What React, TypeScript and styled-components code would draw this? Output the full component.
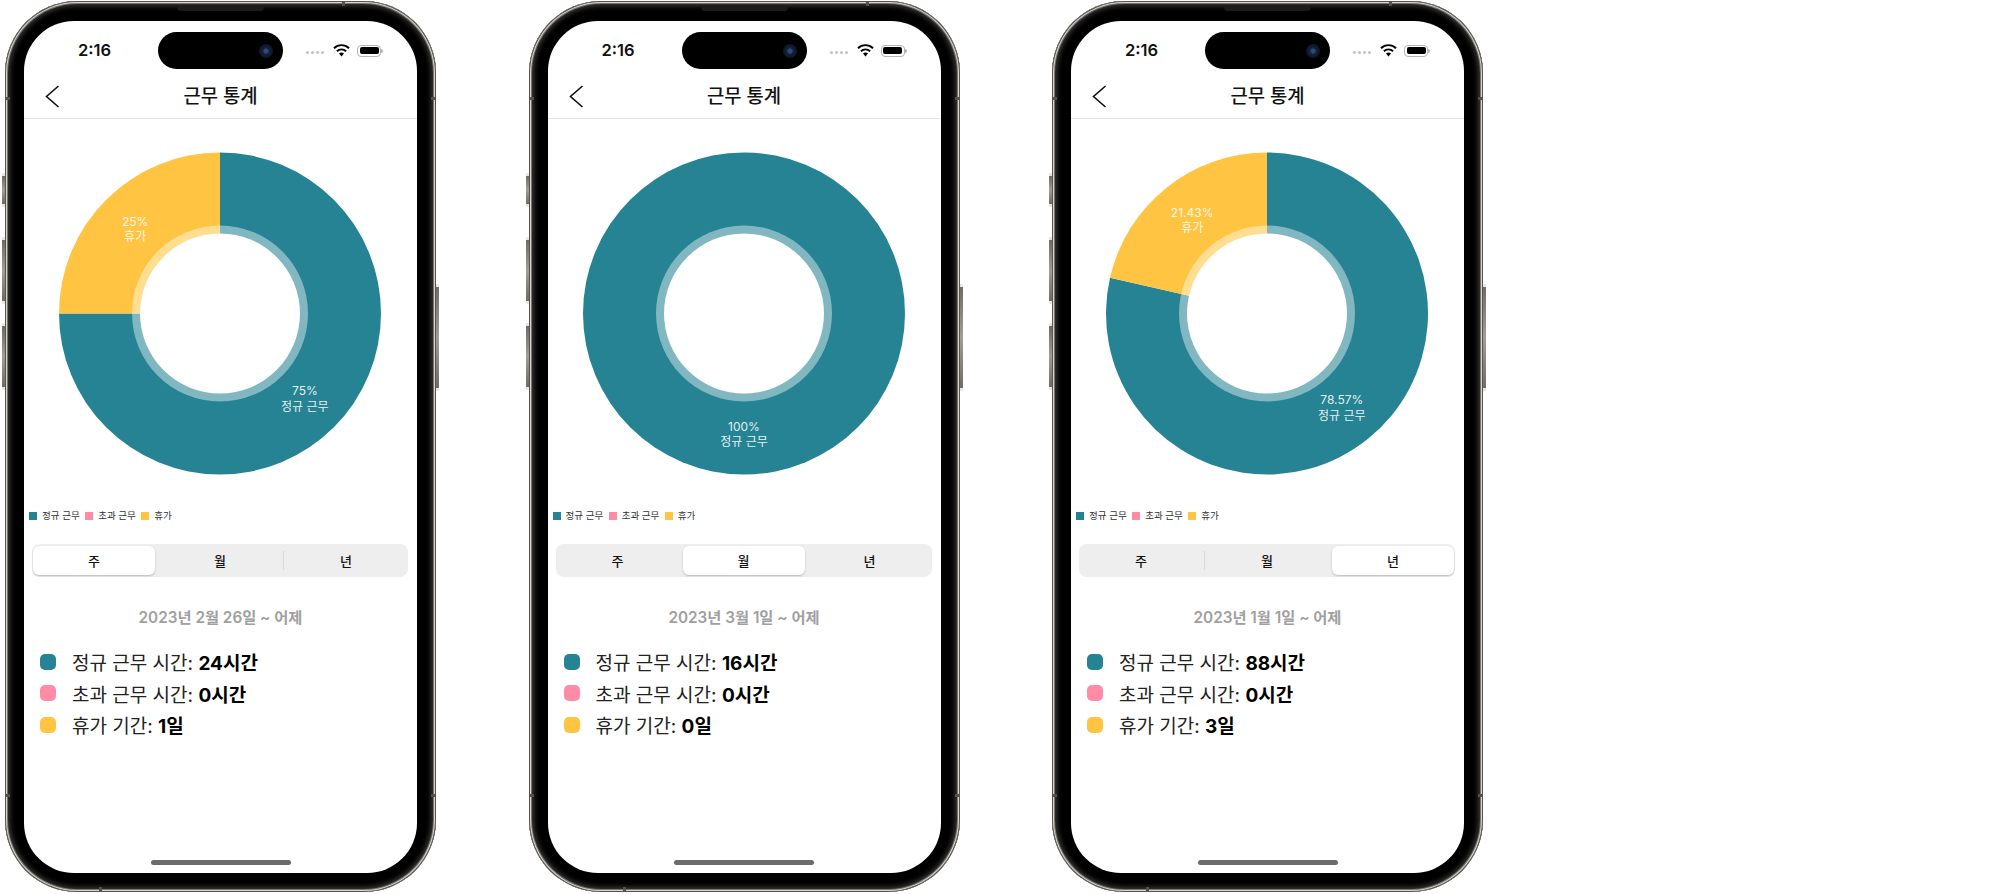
import { FC } from 'react'
import styled, { createGlobalStyle } from 'styled-components'

const TEAL = '#268394'
const PINK = '#ff8ba7'
const YELLOW = '#ffc542'

const GlobalStyle = createGlobalStyle`
  html, body {
    margin: 0;
    padding: 0;
    background: #fff;
  }
  body {
    font-family: Inter, "Noto Sans CJK KR", sans-serif;
    color: #000;
  }
`

const Page = styled.div`
  display: flex;
  gap: 92.5px;
  width: 2012px;
  height: 894px;
  box-sizing: border-box;
  padding: 1px 0 0 5px;
  overflow: hidden;
`

const Phone = styled.div`
  position: relative;
  flex: none;
  width: 431px;
  height: 891px;
  box-sizing: border-box;
  padding: 20px 19px 19px;
  border-radius: 72px;
  background: #000;
  box-shadow:
    inset 0 0 0 1px #57544f,
    inset 0 0 0 2px #d8d5cf,
    inset 0 0 0 3px #77746f,
    inset 0 0 5px 5px #3b3a39;
`

const SideButton = styled.span<{ $side: 'left' | 'right'; $top: number; $height: number }>`
  position: absolute;
  top: ${(p) => p.$top}px;
  ${(p) => p.$side}: -3px;
  width: 3px;
  height: ${(p) => p.$height}px;
  background: linear-gradient(#e8e6e0 0 3px, #6f6c67 3px, #a09d96 50%, #6f6c67 calc(100% - 3px), #e8e6e0 calc(100% - 3px));
  border-radius: 1px;
`

const AntennaBand = styled.span<{ $x: string; $y: string; $wide?: boolean }>`
  position: absolute;
  left: ${(p) => p.$x};
  top: ${(p) => p.$y};
  width: ${(p) => (p.$wide ? '3px' : '5px')};
  height: ${(p) => (p.$wide ? '5px' : '3px')};
  background: #55524e;
`

const Earpiece = styled.span`
  position: absolute;
  top: 6px;
  left: 172px;
  width: 87px;
  height: 4px;
  border-radius: 0 0 6px 6px;
  background: #1c1c1c;
`

const Screen = styled.div`
  width: 393px;
  height: 852px;
  display: flex;
  flex-direction: column;
  border-radius: 50px;
  background: #fff;
  overflow: hidden;
`

const StatusBar = styled.div`
  flex: none;
  height: 52px;
  display: flex;
  align-items: flex-start;
  padding-top: 11px;
  box-sizing: border-box;
`

const Time = styled.div`
  width: 134px;
  box-sizing: border-box;
  height: 37px;
  line-height: 37px;
  text-align: right;
  padding-right: 47px;
  font-size: 16.5px;
  font-weight: 600;
  color: #111;
`

const Island = styled.div`
  flex: none;
  width: 125px;
  height: 37px;
  border-radius: 19px;
  background: #000;
  display: flex;
  align-items: center;
  justify-content: flex-end;
  padding-right: 10px;
  box-sizing: border-box;
`

const Camera = styled.span`
  width: 14px;
  height: 14px;
  border-radius: 50%;
  background: radial-gradient(circle, #2b4a80 0 2px, #14233f 3px, #0f1420 7px);
`

const StatusIcons = styled.div`
  display: flex;
  align-items: center;
  height: 37px;
  margin-left: 23px;
`

const SignalDots = styled.div`
  display: flex;
  gap: 2px;
  margin-right: 9px;
  margin-top: 4px;
`

const SignalDot = styled.span`
  width: 3px;
  height: 3px;
  border-radius: 50%;
  background: #c4c4c4;
`

const Battery = styled.div`
  position: relative;
  width: 24px;
  height: 12px;
  box-sizing: border-box;
  margin-left: 7px;
  padding: 1.5px;
  border: 1px solid #b5b5b5;
  border-radius: 4px;
  &::after {
    content: '';
    position: absolute;
    right: -3px;
    top: 3px;
    width: 2px;
    height: 4px;
    border-radius: 0 2px 2px 0;
    background: #b5b5b5;
  }
`

const BatteryFill = styled.div`
  height: 100%;
  border-radius: 2px;
  background: #000;
`

const NavBar = styled.div`
  flex: none;
  height: 46px;
  box-sizing: border-box;
  border-bottom: 1px solid #e4e4e4;
  display: grid;
  grid-template-columns: 60px 1fr 60px;
  align-items: center;
`

const BackButton = styled.button`
  border: 0;
  padding: 0 0 0 21px;
  background: none;
  display: flex;
  align-items: center;
  height: 46px;
`

const Title = styled.div`
  text-align: center;
  font-size: 18.8px;
  font-weight: 500;
  color: #111;
  margin-top: -3px;
`

const ChartBox = styled.div`
  flex: none;
  height: 389px;
  line-height: 0;
`

const SliceLabel = styled.text`
  font-family: Inter, "Noto Sans CJK KR", sans-serif;
  font-size: 12px;
  fill: #fff;
  fill-opacity: 0.9;
  text-anchor: middle;
`

const Legend = styled.div`
  flex: none;
  display: flex;
  align-items: center;
  gap: 5.5px;
  height: 16px;
  padding-left: 5px;
`

const LegendItem = styled.div`
  display: flex;
  align-items: center;
  gap: 5px;
  font-size: 9.5px;
  line-height: 16px;
  color: #333;
`

const LegendSwatch = styled.span<{ $color: string }>`
  width: 8px;
  height: 8px;
  background: ${(p) => p.$color};
`

const Segment = styled.div`
  flex: none;
  height: 33px;
  margin: 20px 9px 0 8px;
  padding: 2px 1px;
  box-sizing: border-box;
  border-radius: 8px;
  background: #eeeeee;
  display: grid;
  grid-template-columns: repeat(3, 1fr);
  column-gap: 4px;
`

const SegmentTab = styled.div<{ $active: boolean; $divider: boolean }>`
  position: relative;
  display: flex;
  align-items: center;
  justify-content: center;
  font-size: 13px;
  font-weight: 500;
  color: #111;
  border-radius: 6px;
  background: ${(p) => (p.$active ? '#fff' : 'transparent')};
  box-shadow: ${(p) => (p.$active ? '0 1px 2px rgba(0, 0, 0, 0.22)' : 'none')};
  &::after {
    content: '';
    display: ${(p) => (p.$divider ? 'block' : 'none')};
    position: absolute;
    right: -2.5px;
    top: 5px;
    bottom: 5px;
    width: 1px;
    background: #d8d8d8;
  }
`

const DateRange = styled.div`
  flex: none;
  margin-top: 31px;
  text-align: center;
  font-size: 15.3px;
  line-height: 20px;
  font-weight: 600;
  color: #a0a0a0;
`

const StatList = styled.div`
  margin-top: 21px;
  padding-left: 16px;
  display: flex;
  flex-direction: column;
  gap: 6.5px;
`

const StatRow = styled.div`
  display: flex;
  align-items: center;
  gap: 16px;
  height: 25px;
  font-size: 19px;
  color: #222;
`

const StatDot = styled.span<{ $color: string }>`
  width: 16px;
  height: 16px;
  border-radius: 5px;
  background: ${(p) => p.$color};
`

const StatValue = styled.b`
  font-weight: 700;
  color: #000;
`

const HomeBar = styled.div`
  flex: none;
  width: 140px;
  height: 5px;
  margin: auto auto 8px;
  border-radius: 3px;
  background: #6b6b6b;
`

type PhoneData = {
  regular: number
  regularLabel: string
  vacationLabel?: string
  activeTab: number
  range: string
  hours: string
  overtime: string
  vacation: string
}

const phones: PhoneData[] = [
  { regular: 0.75, regularLabel: '75%', vacationLabel: '25%', activeTab: 0, range: '2023년 2월 26일 ~ 어제', hours: '24시간', overtime: '0시간', vacation: '1일' },
  { regular: 1, regularLabel: '100%', activeTab: 1, range: '2023년 3월 1일 ~ 어제', hours: '16시간', overtime: '0시간', vacation: '0일' },
  { regular: 0.7857, regularLabel: '78.57%', vacationLabel: '21.43%', activeTab: 2, range: '2023년 1월 1일 ~ 어제', hours: '88시간', overtime: '0시간', vacation: '3일' },
]

const CX = 196
const CY = 194.5
const OUTER = 161
const LABEL_R = 120

const polar = (fraction: number, r: number) => {
  const a = fraction * Math.PI * 2
  return [CX + r * Math.sin(a), CY - r * Math.cos(a)]
}

const wedge = (from: number, to: number) => {
  const [x1, y1] = polar(from, OUTER)
  const [x2, y2] = polar(to, OUTER)
  const large = to - from > 0.5 ? 1 : 0
  return `M${CX} ${CY}L${x1} ${y1}A${OUTER} ${OUTER} 0 ${large} 1 ${x2} ${y2}Z`
}

const SliceText: FC<{ at: number; percent: string; name: string }> = ({ at, percent, name }) => {
  const [x, y] = polar(at, LABEL_R)
  return (
    <SliceLabel x={x} y={y}>
      <tspan x={x} dy="-3">
        {percent}
      </tspan>
      <tspan x={x} dy="15.5">
        {name}
      </tspan>
    </SliceLabel>
  )
}

const Donut: FC<{ data: PhoneData }> = ({ data }) => (
  <svg width="393" height="389" viewBox="0 0 393 389">
    {data.regular >= 1 ? (
      <circle cx={CX} cy={CY} r={OUTER} fill={TEAL} />
    ) : (
      <>
        <path d={wedge(0, data.regular)} fill={TEAL} />
        <path d={wedge(data.regular, 1)} fill={YELLOW} />
      </>
    )}
    <circle cx={CX} cy={CY} r={88} fill="#fff" fillOpacity={0.42} />
    <circle cx={CX} cy={CY} r={80} fill="#fff" />
    <SliceText at={data.regular / 2} percent={data.regularLabel} name="정규 근무" />
    {data.vacationLabel && <SliceText at={(data.regular + 1) / 2} percent={data.vacationLabel} name="휴가" />}
  </svg>
)

const PhoneScreen: FC<{ data: PhoneData }> = ({ data }) => (
  <Phone>
    <SideButton $side="left" $top={172} $height={34} />
    <SideButton $side="left" $top={236} $height={67} />
    <SideButton $side="left" $top={322} $height={67} />
    <SideButton $side="right" $top={283} $height={107} />
    <AntennaBand $x="337px" $y="0px" $wide />
    <AntennaBand $x="94px" $y="886px" $wide />
    <AntennaBand $x="0px" $y="96px" />
    <AntennaBand $x="426px" $y="96px" />
    <AntennaBand $x="0px" $y="793px" />
    <AntennaBand $x="426px" $y="793px" />
    <Earpiece />
    <Screen>
      <StatusBar>
        <Time>2:16</Time>
        <Island>
          <Camera />
        </Island>
        <StatusIcons>
          <SignalDots>
            <SignalDot />
            <SignalDot />
            <SignalDot />
            <SignalDot />
          </SignalDots>
          <svg width="17" height="13" viewBox="0 0 17 13">
            <path d="M8.5 12.6 6 9.6a3.6 3.6 0 0 1 5 0Z" fill="#000" />
            <path d="M3.9 7.2a6.6 6.6 0 0 1 9.2 0" fill="none" stroke="#000" strokeWidth="1.9" />
            <path d="M1 4.2a10.8 10.8 0 0 1 15 0" fill="none" stroke="#000" strokeWidth="1.9" />
          </svg>
          <Battery>
            <BatteryFill />
          </Battery>
        </StatusIcons>
      </StatusBar>
      <NavBar>
        <BackButton>
          <svg width="15" height="23" viewBox="0 0 15 23">
            <path d="M13.5 1 1.5 11.5l12 10.5" fill="none" stroke="#111" strokeWidth="1.6" />
          </svg>
        </BackButton>
        <Title>근무 통계</Title>
      </NavBar>
      <ChartBox>
        <Donut data={data} />
      </ChartBox>
      <Legend>
        <LegendItem>
          <LegendSwatch $color={TEAL} />
          정규 근무
        </LegendItem>
        <LegendItem>
          <LegendSwatch $color={PINK} />
          초과 근무
        </LegendItem>
        <LegendItem>
          <LegendSwatch $color={YELLOW} />
          휴가
        </LegendItem>
      </Legend>
      <Segment>
        {['주', '월', '년'].map((tab, i) => (
          <SegmentTab key={tab} $active={i === data.activeTab} $divider={i < 2 && i !== data.activeTab && i + 1 !== data.activeTab}>
            {tab}
          </SegmentTab>
        ))}
      </Segment>
      <DateRange>{data.range}</DateRange>
      <StatList>
        <StatRow>
          <StatDot $color={TEAL} />
          <span>
            정규 근무 시간: <StatValue>{data.hours}</StatValue>
          </span>
        </StatRow>
        <StatRow>
          <StatDot $color={PINK} />
          <span>
            초과 근무 시간: <StatValue>{data.overtime}</StatValue>
          </span>
        </StatRow>
        <StatRow>
          <StatDot $color={YELLOW} />
          <span>
            휴가 기간: <StatValue>{data.vacation}</StatValue>
          </span>
        </StatRow>
      </StatList>
      <HomeBar />
    </Screen>
  </Phone>
)

const App: FC = () => (
  <>
    <GlobalStyle />
    <Page>
      {phones.map((data) => (
        <PhoneScreen key={data.range} data={data} />
      ))}
    </Page>
  </>
)

export default App
